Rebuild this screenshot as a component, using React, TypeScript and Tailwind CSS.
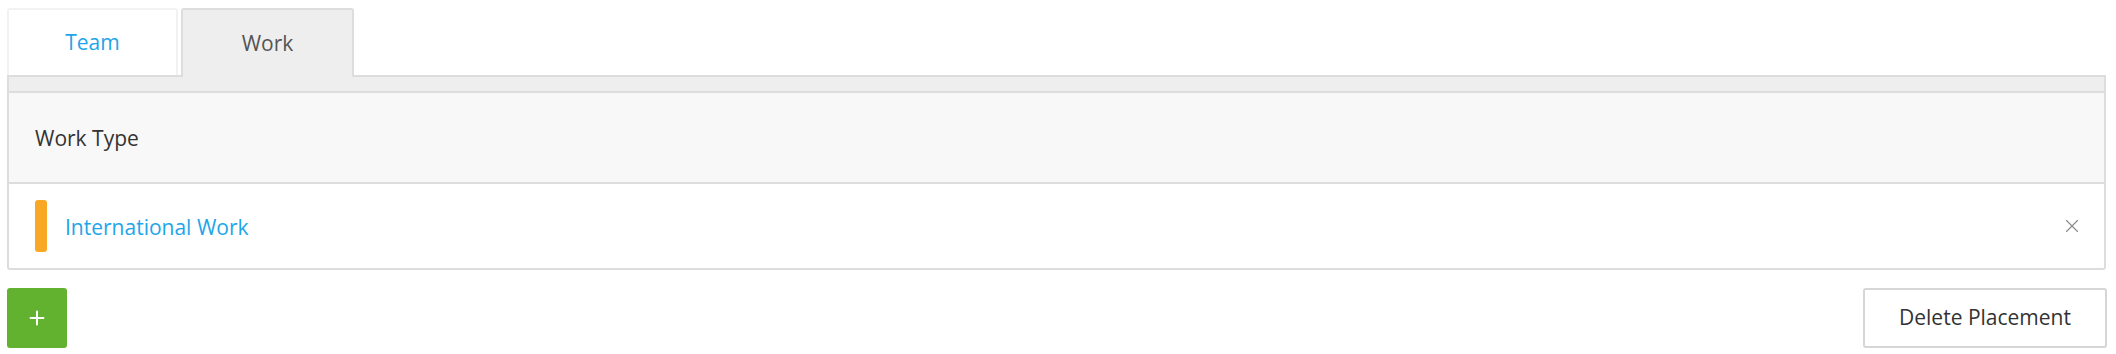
import { Plus, X } from "lucide-react";

export default function App() {
  return (
    <div
      className="w-[2116px] h-[354px] bg-white pl-[7px] pr-[10px] pt-[8px] text-[21px] text-[#333]"
      style={{ fontFamily: '"Open Sans", "Liberation Sans", sans-serif' }}
    >
      {/* tabs */}
      <div className="flex flex-row items-end gap-[3px]">
        <button className="w-[171px] h-[67px] bg-white border-2 border-b-0 border-[#f2f2f2] rounded-t-[3px] text-[#1ea5e9]">
          Team
        </button>
        <button className="relative z-10 -mb-[2px] w-[173px] h-[69px] bg-[#eeeeee] border-2 border-b-0 border-[#dddddd] rounded-t-[3px] text-[#555]">
          Work
        </button>
      </div>

      {/* panel */}
      <div className="border-2 border-[#dddddd] rounded-b-[3px] bg-white">
        <div className="h-[16px] bg-[#eeeeee] border-b-2 border-[#dddddd]" />
        <div className="h-[91px] flex items-center pl-[26px] pt-[2px] bg-[#f8f8f8] border-b-2 border-[#dddddd]">
          Work Type
        </div>
        <div className="h-[84px] flex flex-row items-center justify-between pl-[26px] pr-[21px]">
          <div className="flex flex-row items-center gap-[18px]">
            <div className="w-[12px] h-[52px] rounded-[3px] bg-[#f9a826]" />
            <span className="text-[#1ea5e9] mt-[3px]">International Work</span>
          </div>
          <X className="w-[22px] h-[22px] text-[#888]" strokeWidth={1.2} />
        </div>
      </div>

      {/* actions */}
      <div className="flex flex-row justify-between items-center mt-[18px]">
        <button className="w-[60px] h-[60px] rounded-[3px] bg-[#62b22f] flex items-center justify-center text-white">
          <Plus className="w-[22px] h-[22px]" strokeWidth={2.2} />
        </button>
        <button className="h-[60px] w-[244px] -mr-[1px] rounded-[3px] border-2 border-[#d6d6d6] bg-white text-[#333]">
          Delete Placement
        </button>
      </div>
    </div>
  );
}
